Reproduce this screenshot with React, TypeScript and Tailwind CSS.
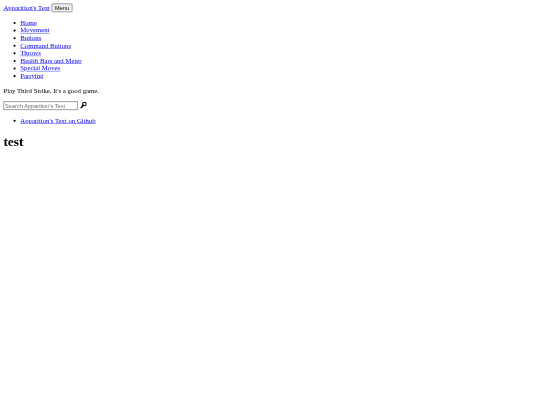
const navLinks = [
  "Home",
  "Movement",
  "Buttons",
  "Command Buttons",
  "Throws",
  "Health Bars and Meter",
  "Special Moves",
  "Parrying",
];

const linkClass = "text-[#0000ee] underline";

function SearchIcon() {
  return (
    <svg viewBox="0 0 16 18" className="ml-[5px] h-[18px] w-[16px]" aria-hidden="true">
      <circle cx="10" cy="6.5" r="4.2" fill="none" stroke="#000" strokeWidth="2.4" />
      <path d="M7 9.6 2 15.6" stroke="#000" strokeWidth="3.4" strokeLinecap="round" />
    </svg>
  );
}

export default function App() {
  return (
    <div className="h-[405px] w-[540px] overflow-hidden bg-white blur-[0.6px]">
      {/* the shot is a 1280px wide page shrunk down to 540px */}
      <div className="w-[1280px] origin-top-left scale-[0.4219] p-2 font-['Liberation_Serif',serif] text-[16px] leading-[18px] text-black">
        <div className="flex h-[21px] items-center gap-[4px]">
          <a href="#" className={linkClass}>
            Apparition's Text
          </a>
          <button
            type="button"
            className="h-[21px] rounded-[3px] border-2 border-[#8f8f8f] bg-[#efefef] px-[6px] font-['Liberation_Sans',sans-serif] text-[13.33px] leading-none"
          >
            Menu
          </button>
        </div>

        <ul className="my-4 list-disc pl-10">
          {navLinks.map((link) => (
            <li key={link}>
              <a href="#" className={linkClass}>
                {link}
              </a>
            </li>
          ))}
        </ul>

        <p className="mt-[17px] mb-4">Play Third Strike. It's a good game.</p>

        <form className="flex h-[21px] items-start">
          <input
            type="text"
            placeholder="Search Apparition's Text"
            className="h-[21px] w-[177px] border-2 border-[#8f8f8f] px-[2px] font-['Liberation_Sans',sans-serif] text-[13.33px] leading-none placeholder:text-[#757575]"
          />
          <SearchIcon />
        </form>

        <ul className="my-4 list-disc pl-10">
          <li>
            <a href="#" className={linkClass}>
              Apparition's Text on Github
            </a>
          </li>
        </ul>

        <h1 className="my-[21px] text-[32px] leading-[37px] font-bold">test</h1>
      </div>
    </div>
  );
}
